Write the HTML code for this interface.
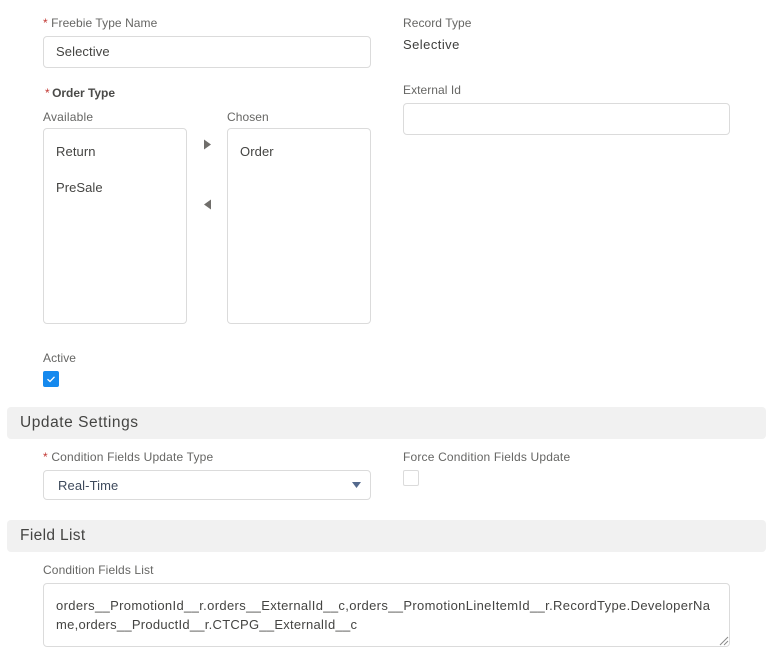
<!DOCTYPE html>
<html>
<head>
<meta charset="utf-8">
<style>
html,body{margin:0;padding:0;background:#fff;}
body{width:774px;height:660px;position:relative;overflow:hidden;font-family:"Liberation Sans",sans-serif;color:#3e3e3c;}
.t{position:absolute;white-space:nowrap;line-height:16px;}
.l{font-size:12px;color:#666664;letter-spacing:.06px;}
.v{font-size:13px;color:#444442;letter-spacing:.1px;}
.r{color:#c23934;}
.b{position:absolute;box-sizing:border-box;border:1px solid #dbdbdb;border-radius:4px;background:#fff;}
.h{position:absolute;left:7px;width:759px;height:32px;background:#f1f1f1;border-radius:4px;}
.s{font-size:15.5px;color:#444442;}
svg{position:absolute;}
</style>
</head>
<body>
<div class="t l" style="left:43px;top:15px"><span class="r">*</span> Freebie Type Name</div>
<div class="b" style="left:43px;top:36px;width:328px;height:32px"></div>
<div class="t v" style="left:56px;top:44px">Selective</div>

<div class="t l" style="left:403px;top:15px">Record Type</div>
<div class="t v" style="left:403px;top:37px;letter-spacing:.45px;color:#3e3e3c">Selective</div>

<div class="t" style="left:45px;top:85px;font-size:12px;font-weight:bold;color:#4a4a48"><span class="r" style="font-weight:normal">*</span><span style="letter-spacing:-.02px;margin-left:2.4px">Order Type</span></div>
<div class="t l" style="left:403px;top:82px">External Id</div>
<div class="b" style="left:403px;top:103px;width:327px;height:32px"></div>

<div class="t l" style="left:43px;top:109px;letter-spacing:.2px">Available</div>
<div class="t l" style="left:227px;top:109px">Chosen</div>
<div class="b" style="left:43px;top:128px;width:144px;height:196px"></div>
<div class="b" style="left:227px;top:128px;width:144px;height:196px"></div>
<div class="t v" style="left:56px;top:144px">Return</div>
<div class="t v" style="left:56px;top:180px;letter-spacing:.05px">PreSale</div>
<div class="t v" style="left:240px;top:144px">Order</div>
<svg style="left:204px;top:139px" width="8" height="11"><path d="M0 .5L7 5.5L0 10.5Z" fill="#706e6b"/></svg>
<svg style="left:204px;top:199px" width="8" height="11"><path d="M7 .5L0 5.5L7 10.5Z" fill="#706e6b"/></svg>

<div class="t l" style="left:43px;top:350px">Active</div>
<div style="position:absolute;left:43px;top:371px;width:16px;height:16px;background:#1589ee;border-radius:2px"></div>
<svg style="left:43px;top:371px" width="16" height="16"><path d="M4.5 8.2L7 10.5L11.5 5.8" fill="none" stroke="#fff" stroke-width="1.3"/></svg>

<div class="h" style="top:407px"></div>
<div class="t s" style="left:20px;top:415px;letter-spacing:.55px">Update Settings</div>

<div class="t l" style="left:43px;top:449px;letter-spacing:.17px"><span class="r">*</span> Condition Fields Update Type</div>
<div class="b" style="left:43px;top:470px;width:328px;height:30px"></div>
<div class="t v" style="left:58px;top:478px;color:#3e4a5c">Real-Time</div>
<svg style="left:352px;top:482px" width="10" height="6"><path d="M0 0H9L4.5 6Z" fill="#54698d"/></svg>

<div class="t l" style="left:403px;top:449px;letter-spacing:.18px">Force Condition Fields Update</div>
<div class="b" style="left:403px;top:470px;width:16px;height:16px;border-radius:2px"></div>

<div class="h" style="top:520px"></div>
<div class="t s" style="left:20px;top:528px;letter-spacing:.35px">Field List</div>

<div class="t l" style="left:43px;top:562px;letter-spacing:.12px">Condition Fields List</div>
<div class="b" style="left:43px;top:583px;width:687px;height:64px"></div>
<div class="t v" style="left:56px;top:596px;line-height:19px;letter-spacing:.35px">orders__PromotionId__r.orders__ExternalId__c,orders__PromotionLineItemId__r.RecordType.DeveloperNa<br><span style="letter-spacing:.26px">me,orders__ProductId__r.CTCPG__ExternalId__c</span></div>
<svg style="left:719px;top:636px" width="10" height="10"><path d="M1 9L9 1M5 9L9 5" stroke="#8a8a8a" stroke-width="1" fill="none"/></svg>
</body>
</html>
